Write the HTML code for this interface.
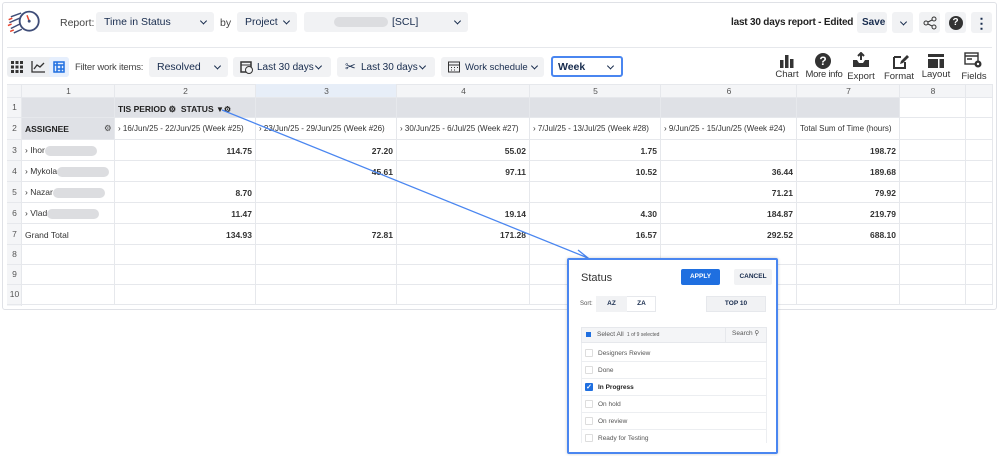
<!DOCTYPE html>
<html><head><meta charset="utf-8"><style>
*{box-sizing:border-box;margin:0;padding:0}
body{width:999px;height:456px;background:#fff;font-family:"Liberation Sans",sans-serif;color:#172b4d;position:relative;overflow:hidden}
.a{position:absolute}
.card{left:2px;top:2px;width:995px;height:308px;border:1px solid #dfe1e6;border-radius:3px;background:#fff}
.sel{position:absolute;background:#f1f2f4;border-radius:3px;font-size:10.5px;color:#172b4d;padding-left:8px;display:flex;align-items:center;white-space:nowrap}
.sel .ch{position:absolute;right:8px;top:50%;width:5px;height:5px;border-right:1.5px solid #172b4d;border-bottom:1.5px solid #172b4d;transform:translateY(-70%) rotate(45deg)}
.t{font-size:10.5px;position:absolute;white-space:nowrap}
.grid div{position:absolute;font-size:8.5px;color:#333}
.cell{border-right:1px solid #e6e8ec;border-bottom:1px solid #e6e8ec}
.num{text-align:right;font-weight:bold;color:#222;padding-right:4px;font-size:8.5px}
.ic{position:absolute;text-align:center;font-size:9.5px;color:#333;white-space:nowrap}
.pop{left:567px;top:258px;width:211px;height:196px;border:2px solid #4a86f0;background:#fff;border-radius:2px;box-shadow:0 0 3px rgba(0,0,0,.2)}
.it{position:absolute;left:12px;width:186px;height:17px;border-bottom:1px solid #eceef1;font-size:6.5px;color:#555;padding-left:16px;line-height:17px}
.it i{position:absolute;left:3px;top:4px;width:8px;height:8px;border:1px solid #ddd;border-radius:1px}
</style></head><body>
<div class="a card"></div>
<svg class="a" style="left:5px;top:5px" width="44" height="36" viewBox="0 0 60 45">
<circle cx="33" cy="20" r="13" fill="none" stroke="#3f4d78" stroke-width="2.5"/>
<line x1="33" y1="20" x2="30" y2="12" stroke="#e8442e" stroke-width="2"/><circle cx="33" cy="20" r="2" fill="#3f4d78"/>
<path d="M22 9 L8 14 M20 16 L6 22 M20 24 L8 30 M23 31 L12 36" stroke="#3f4d78" stroke-width="2" fill="none"/>
<path d="M10 16 L5 18 M9 24 L4 26 M12 32 L7 34" stroke="#e8442e" stroke-width="2"/>
</svg>
<div class="t" style="left:60px;top:17px;color:#444">Report:</div>
<div class="sel" style="left:96px;top:12px;width:118px;height:20px">Time in Status<span class="ch"></span></div>
<div class="t" style="left:220px;top:17px;color:#444">by</div>
<div class="sel" style="left:237px;top:12px;width:60px;height:20px">Project<span class="ch"></span></div>
<div class="sel" style="left:304px;top:12px;width:164px;height:20px"><span style="display:inline-block;width:54px;height:10px;background:#dcdde0;border-radius:5px;margin:0 4px 0 22px"></span>[SCL]<span class="ch"></span></div>
<div class="t" style="left:731px;top:17px;font-weight:bold;font-size:10px;color:#222;letter-spacing:-0.2px">last 30 days report - Edited</div>
<div class="sel" style="left:857px;top:12px;width:30px;height:21px;font-weight:bold;font-size:10px;padding-left:5px">Save</div>
<div class="sel" style="left:892px;top:12px;width:21px;height:21px"><span class="ch" style="right:7px"></span></div>
<div class="sel" style="left:919px;top:12px;width:21px;height:21px;justify-content:center;padding:0">
<svg width="14" height="14" viewBox="0 0 14 14"><circle cx="11" cy="3" r="2" fill="none" stroke="#333"/><circle cx="3" cy="7" r="2" fill="none" stroke="#333"/><circle cx="11" cy="11" r="2" fill="none" stroke="#333"/><path d="M9 4L5 6M5 8L9 10" stroke="#333"/></svg></div>
<div class="sel" style="left:945px;top:12px;width:21px;height:21px;justify-content:center;padding:0"><span style="width:14px;height:14px;border-radius:50%;background:#333;color:#fff;font-size:10px;font-weight:bold;text-align:center;line-height:14px">?</span></div>
<div class="sel" style="left:971px;top:12px;width:21px;height:21px;justify-content:center;padding:0;font-weight:bold;font-size:14px;line-height:1">⋮</div>
<div class="a" style="left:7px;top:47px;width:985px;height:1px;background:#e6e8ec"></div>
<div class="a" style="left:7px;top:57px;width:62px;height:20px;background:#eceef1;border-radius:3px"></div>
<div class="a" style="left:49px;top:57px;width:20px;height:20px;background:#e6effd;border-radius:3px"></div>
<svg class="a" style="left:11px;top:61px" width="12" height="12"><g fill="#333"><rect x="0" y="0" width="3" height="3"/><rect x="4.5" y="0" width="3" height="3"/><rect x="9" y="0" width="3" height="3"/><rect x="0" y="4.5" width="3" height="3"/><rect x="4.5" y="4.5" width="3" height="3"/><rect x="9" y="4.5" width="3" height="3"/><rect x="0" y="9" width="3" height="3"/><rect x="4.5" y="9" width="3" height="3"/><rect x="9" y="9" width="3" height="3"/></g></svg>
<svg class="a" style="left:31px;top:61px" width="14" height="12"><path d="M1 0V11H14M3 8L6 4L9 6L13 2" fill="none" stroke="#333" stroke-width="1.3"/></svg>
<svg class="a" style="left:53px;top:61px" width="12" height="12"><g fill="none" stroke="#1f6fe0" stroke-width="1.5"><rect x="1" y="1" width="10" height="10"/><path d="M1 4H11M4 1V11M8 4V11M4 8H11"/></g></svg>
<div class="t" style="left:75px;top:62px;color:#444;font-size:9.5px;letter-spacing:-0.2px">Filter work items:</div>
<div class="sel" style="left:149px;top:57px;width:79px;height:20px">Resolved<span class="ch"></span></div>
<div class="sel" style="left:233px;top:57px;width:98px;height:20px;padding-left:24px;font-size:10px"><svg style="position:absolute;left:7px;top:3px" width="13" height="14"><rect x="1" y="2" width="10" height="10" fill="none" stroke="#333" stroke-width="1.5"/><path d="M1 5H11" stroke="#333"/><circle cx="9" cy="10" r="3.5" fill="#f1f2f4" stroke="#333"/></svg>Last 30 days<span class="ch" style="right:10px"></span></div>
<div class="sel" style="left:337px;top:57px;width:98px;height:20px;padding-left:24px;font-size:10px"><span style="position:absolute;left:8px;font-size:13px">✂</span>Last 30 days<span class="ch" style="right:10px"></span></div>
<div class="sel" style="left:441px;top:57px;width:103px;height:20px;padding-left:24px;font-size:9.5px"><svg style="position:absolute;left:7px;top:4px" width="12" height="12"><rect x="0.5" y="1" width="11" height="10" fill="none" stroke="#333"/><path d="M0.5 4H11.5M3 6.5H4M6 6.5H7M9 6.5H10M3 9H4M6 9H7" stroke="#333"/></svg>Work schedule<span class="ch" style="right:7px"></span></div>
<div class="sel" style="left:551px;top:56px;width:72px;height:21px;background:#fff;border:2px solid #4a86f0;font-weight:bold;font-size:10.5px;padding-left:5px">Week<span class="ch"></span></div>
<svg class="a" style="left:779px;top:53px" width="16" height="16"><rect x="1" y="7" width="3.5" height="8" fill="#333"/><rect x="6" y="2" width="3.5" height="13" fill="#333"/><rect x="11" y="6" width="3.5" height="9" fill="#333"/></svg>
<div class="ic" style="left:772px;top:69px;width:30px">Chart</div>
<div class="a" style="left:815px;top:53px;width:16px;height:16px;border-radius:50%;background:#333;color:#fff;font-weight:bold;font-size:12px;text-align:center;line-height:16px">?</div>
<div class="ic" style="left:803px;top:69px;width:42px;letter-spacing:-0.3px">More info</div>
<svg class="a" style="left:852px;top:52px" width="18" height="17"><path d="M1 8V15H17V8H13L11 11H7L5 8Z" fill="#333"/><path d="M9 1V8M6 4L9 1L12 4" stroke="#333" stroke-width="2" fill="none"/></svg>
<div class="ic" style="left:845px;top:71px;width:32px">Export</div>
<svg class="a" style="left:892px;top:53px" width="18" height="17"><path d="M2 4H9M2 4V15H13V9" stroke="#333" stroke-width="2" fill="none"/><path d="M8 11L9 8L15 2L17 4L11 10Z" fill="#333"/></svg>
<div class="ic" style="left:882px;top:71px;width:34px">Format</div>
<svg class="a" style="left:928px;top:53px" width="16" height="16"><rect x="0" y="1" width="16" height="3" fill="#333"/><rect x="0" y="6" width="10" height="9" fill="#333"/><rect x="11.5" y="6" width="4.5" height="9" fill="#333"/></svg>
<div class="ic" style="left:919px;top:69px;width:34px">Layout</div>
<svg class="a" style="left:964px;top:52px" width="18" height="17"><rect x="1" y="1" width="13" height="11" fill="none" stroke="#333" stroke-width="1.4"/><path d="M1 4H14M3 7H8" stroke="#333" stroke-width="1.4"/><circle cx="14" cy="12" r="3.5" fill="#333"/><circle cx="14" cy="12" r="1.2" fill="#fff"/></svg>
<div class="ic" style="left:958px;top:71px;width:32px">Fields</div>
<div class="grid">
<div style="left:7px;top:84px;width:986px;height:14px;background:#f4f5f7;border-top:1px solid #e6e8ec;border-bottom:1px solid #e6e8ec"></div>
<div style="left:7px;top:98px;width:15px;height:208px;background:#f4f5f7;border-right:1px solid #e6e8ec"></div>
<div style="left:256px;top:84px;width:141px;height:14px;background:#e7eef8;border-bottom:1px solid #c8d6ec"></div>
<div style="left:22px;top:98px;width:878px;height:20px;background:#dfe1e6"></div>
<div style="left:22px;top:118px;width:93px;height:22px;background:#dfe1e6"></div>
</div>
<div class="grid" id="g"></div>
<svg class="a" style="left:0;top:0" width="999" height="456"><path d="M222 110L588 258M578 250L588 258L577 260" stroke="#4a86f0" stroke-width="1.3" fill="none"/></svg>
<div class="a pop">
<div class="a" style="left:12px;top:12px;font-size:11px;color:#333">Status</div>
<div class="a" style="left:112px;top:9px;width:39px;height:16px;background:#1f6fe0;border-radius:2px;color:#fff;font-size:6.5px;font-weight:bold;text-align:center;line-height:16px">APPLY</div>
<div class="a" style="left:165px;top:9px;width:38px;height:16px;background:#f1f2f4;border-radius:2px;font-size:6.5px;font-weight:bold;text-align:center;line-height:16px">CANCEL</div>
<div class="a" style="left:11px;top:41px;font-size:6px;color:#555">Sort:</div>
<div class="a" style="left:27px;top:36px;width:60px;height:16px;border:1px solid #e6e8ec"></div>
<div class="a" style="left:27px;top:36px;width:31px;height:16px;background:#f1f2f4;font-size:6.5px;font-weight:bold;text-align:center;line-height:16px">AZ</div>
<div class="a" style="left:58px;top:36px;width:29px;height:16px;font-size:6.5px;font-weight:bold;text-align:center;line-height:16px">ZA</div>
<div class="a" style="left:137px;top:36px;width:60px;height:16px;background:#f1f2f4;border:1px solid #e6e8ec;font-size:6.5px;font-weight:bold;text-align:center;line-height:14px">TOP 10</div>
<div class="a" style="left:12px;top:67px;width:186px;height:16px;background:#f4f5f7;border:1px solid #e6e8ec;font-size:6.5px;color:#555;line-height:14px;padding-left:15px">Select All <span style="font-size:5px">&nbsp;1 of 9 selected</span><span style="position:absolute;left:4px;top:4px;width:5px;height:5px;background:#1f6fe0"></span><span style="position:absolute;left:143px;top:-1px;height:16px;border-left:1px solid #e6e8ec;padding-left:6px">Search ⚲</span></div>
<div class="a" style="left:12px;top:83px;width:186px;height:100px;border-left:1px solid #eceef1;border-right:1px solid #eceef1;overflow:hidden">
<div class="it" style="left:0;top:2px"><i></i>Designers Review</div>
<div class="it" style="left:0;top:19px"><i></i>Done</div>
<div class="it" style="left:0;top:36px;font-weight:bold;color:#222"><i style="background:#1f6fe0;border-color:#1f6fe0;color:#fff;font-size:7px;line-height:7px;font-style:normal;text-align:center">✓</i>In Progress</div>
<div class="it" style="left:0;top:53px"><i></i>On hold</div>
<div class="it" style="left:0;top:70px"><i></i>On review</div>
<div class="it" style="left:0;top:87px"><i></i>Ready for Testing</div>
</div>
</div>
<script>
var cx=[7,22,115,256,397,530,661,797,900,966,993];
var ry=[84,98,118,140,161,182,203,224,245,265,285,305];
var h='';
for(var c=0;c<10;c++)for(var r=0;r<11;r++){h+='<div class="cell" style="left:'+cx[c]+'px;top:'+ry[r]+'px;width:'+(cx[c+1]-cx[c])+'px;height:'+(ry[r+1]-ry[r])+'px"></div>';}
for(var c=1;c<9;c++)h+='<div style="left:'+cx[c]+'px;top:86px;width:'+(cx[c+1]-cx[c])+'px;text-align:center;color:#555">'+c+'</div>';
for(var r=1;r<11;r++)h+='<div style="left:7px;top:'+(ry[r]+(ry[r+1]-ry[r])/2-6)+'px;width:15px;text-align:center;color:#555">'+r+'</div>';
function tx(x,y,s,st){h+='<div style="left:'+x+'px;top:'+y+'px;white-space:nowrap;'+(st||'')+'">'+s+'</div>';}
tx(118,104,'TIS PERIOD ⚙ &nbsp;STATUS <span style="font-size:8px">▼⚙</span>','font-weight:bold;color:#222');
tx(25,124,'ASSIGNEE','font-weight:bold;color:#222');tx(104,123,'⚙','color:#444');
var hd=['› 16/Jun/25 - 22/Jun/25 (Week #25)','› 23/Jun/25 - 29/Jun/25 (Week #26)','› 30/Jun/25 - 6/Jul/25 (Week #27)','› 7/Jul/25 - 13/Jul/25 (Week #28)','› 9/Jun/25 - 15/Jun/25 (Week #24)','Total Sum of Time (hours)'];
for(var i=0;i<6;i++)tx(cx[i+2]+3,124,hd[i],'font-size:8px');
var nm=[['Ihor',52],['Mykola',52],['Nazar',52],['Vlad',52]];
for(var i=0;i<4;i++){tx(25,ry[i+3]+5,'› '+nm[i][0]+'<span style="display:inline-block;width:'+nm[i][1]+'px;height:10px;border-radius:5px;background:#dcdde0;vertical-align:middle"></span>');}
tx(25,ry[7]+6,'Grand Total');
var d=[['114.75','27.20','55.02','1.75','','198.72'],['','45.61','97.11','10.52','36.44','189.68'],['8.70','','','','71.21','79.92'],['11.47','','19.14','4.30','184.87','219.79'],['134.93','72.81','171.28','16.57','292.52','688.10']];
for(var r=0;r<5;r++)for(var c=0;c<6;c++)if(d[r][c])h+='<div class="num" style="left:'+cx[c+2]+'px;top:'+(ry[r+3]+6)+'px;width:'+(cx[c+3]-cx[c+2])+'px">'+d[r][c]+'</div>';
document.getElementById('g').innerHTML=h;
</script>
</body></html>
